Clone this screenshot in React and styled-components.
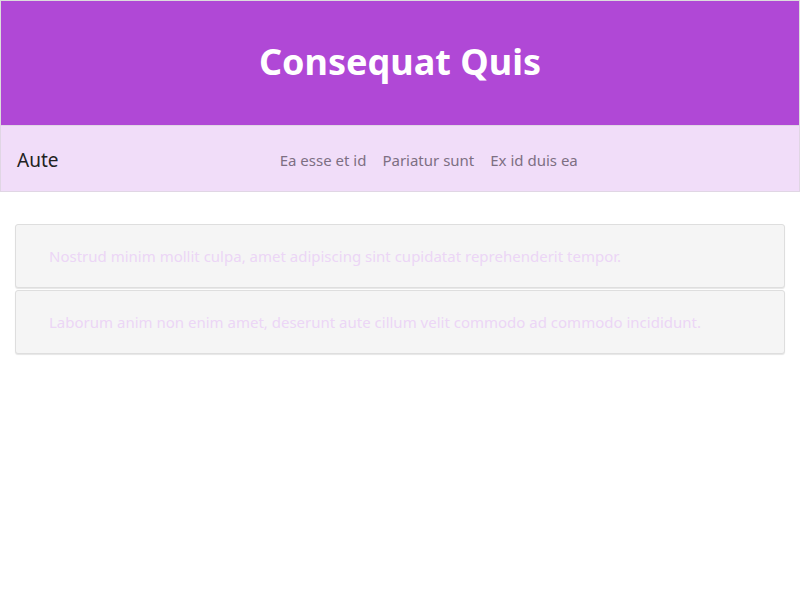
import styled, { createGlobalStyle } from "styled-components";

const GlobalStyle = createGlobalStyle`
  body {
    margin: 0;
    background: #fff;
    font-family: "Noto Sans", "Open Sans", sans-serif;
  }
`;

const Header = styled.header`
  height: 125px;
  box-sizing: border-box;
  padding-bottom: 4px;
  background-color: #b048d6;
  border: 1px solid #dcdcdc;
  border-bottom: none;
  display: flex;
  align-items: center;
  justify-content: center;
`;

const Title = styled.h1`
  margin: 0;
  color: #fff;
  font-size: 36px;
  font-weight: 700;
`;

const NavBar = styled.nav`
  height: 65px;
  background-color: #f1ddf9;
  border: 1px solid #e0d6e4;
  display: flex;
  align-items: center;
  padding-left: 16px;
`;

const Brand = styled.div`
  font-size: 19px;
  color: #222;
  padding-top: 2px;
`;

const Links = styled.div`
  flex: 1;
  display: flex;
  justify-content: center;
  gap: 16px;
  padding-top: 2px;
`;

const NavLink = styled.a`
  font-size: 15px;
  color: #7d6f83;
  text-decoration: none;
`;

const Main = styled.main`
  padding: 32px 15px;
  display: flex;
  flex-direction: column;
  gap: 2px;
`;

const Card = styled.div`
  background-color: #f5f5f5;
  border: 1px solid #dedede;
  border-radius: 3px;
  box-shadow: 0 1px 1px rgba(0, 0, 0, 0.1);
  padding: 20px 33px;
  font-size: 15px;
  line-height: 22px;
  color: #ecd6f6;
`;

export default function App() {
  return (
    <>
      <GlobalStyle />
      <Header>
        <Title>Consequat Quis</Title>
      </Header>
      <NavBar>
        <Brand>Aute</Brand>
        <Links>
          <NavLink>Ea esse et id</NavLink>
          <NavLink>Pariatur sunt</NavLink>
          <NavLink>Ex id duis ea</NavLink>
        </Links>
      </NavBar>
      <Main>
        <Card>Nostrud minim mollit culpa, amet adipiscing sint cupidatat reprehenderit tempor.</Card>
        <Card>Laborum anim non enim amet, deserunt aute cillum velit commodo ad commodo incididunt.</Card>
      </Main>
    </>
  );
}
